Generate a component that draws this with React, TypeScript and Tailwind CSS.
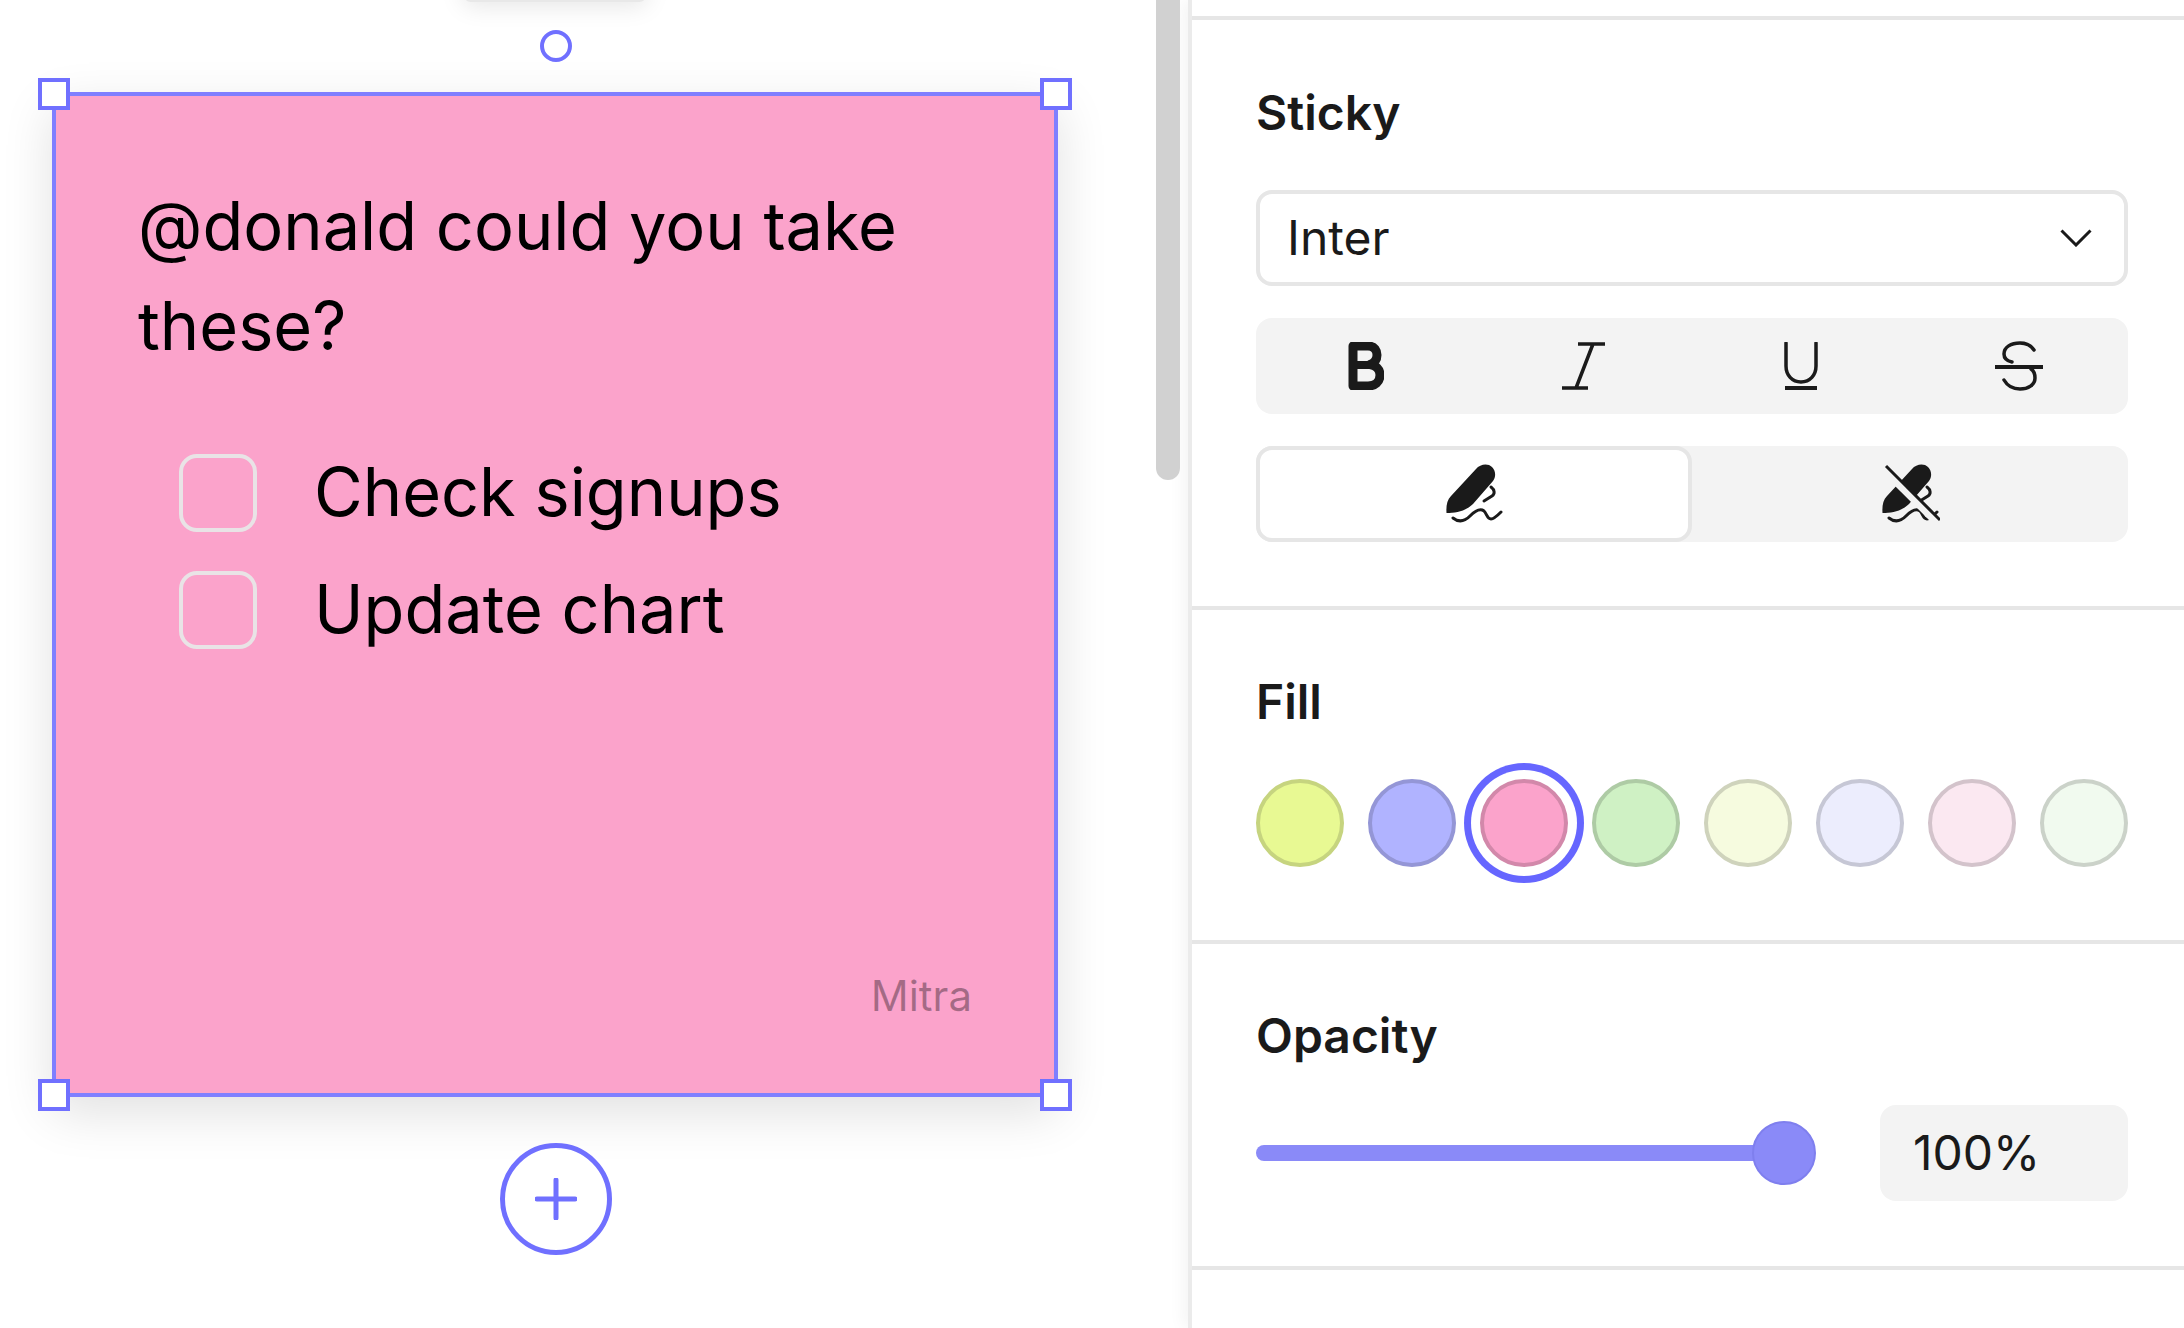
const font = { fontFamily: "Inter, sans-serif" };

const swatches = [
  { color: "bg-[#e8f993]", border: "border-[#c6d47f]", selected: false },
  { color: "bg-[#b0b3ff]", border: "border-[#9496d6]", selected: false },
  { color: "bg-[#fba3cb]", border: "border-[#d288aa]", selected: true },
  { color: "bg-[#cff1c4]", border: "border-[#aecba5]", selected: false },
  { color: "bg-[#f6fbdf]", border: "border-[#cfd3bc]", selected: false },
  { color: "bg-[#ecedfd]", border: "border-[#c6c7d5]", selected: false },
  { color: "bg-[#fbe8f1]", border: "border-[#d3c3cb]", selected: false },
  { color: "bg-[#f1faef]", border: "border-[#cbd2c9]", selected: false },
];

// Corner handle of the selection box
function Handle({ className }: { className: string }) {
  return <div className={`absolute h-8 w-8 border-4 border-[#7070ff] bg-white ${className}`} />;
}

function PenIcon({ off }: { off?: boolean }) {
  return (
    <svg width="60" height="62" viewBox="0 0 60 62" fill="none" className="text-[#1a1a1a]">
      <path
        d="M2.5 50 C2 43 3 37 7 33 L32 6 C36 1 44 0 48 4 C52 8 52 14 49 18 L29 41 C22 48 12 50 2.5 50 Z"
        fill="currentColor"
      />
      <path d="M47 24 C51 27 51 31 48 33 L40 38" stroke="currentColor" strokeWidth="3" strokeLinecap="round" />
      <path
        d="M9 55 C14 59 20 59 26 53 C30 49 36 45 40 48 C43 51 43 56 47 56 C50 56 54 52 57 49"
        stroke="currentColor"
        strokeWidth="3"
        strokeLinecap="round"
      />
      {off && (
        <>
          <path d="M3 6 L55 58" stroke="#f3f3f3" strokeWidth="7" />
          <path d="M6 3 L60 57" stroke="currentColor" strokeWidth="3" />
        </>
      )}
    </svg>
  );
}

export default function App() {
  return (
    <div className="flex h-screen w-full overflow-hidden bg-white text-[#1a1a1a]" style={font}>
      {/* Canvas */}
      <div className="relative w-[1188px] shrink-0 pl-[52px] pt-[92px]">
        <div className="absolute left-[463px] top-[-40px] h-[42px] w-[184px] rounded-lg bg-[#e8e8e8] shadow-[0_4px_24px_rgba(0,0,0,0.1)]" />

        <div className="relative h-[1005px] w-[1006px] border-4 border-[#7f7fff] bg-[#fba3cb] pl-[82px] pt-[80px] text-black shadow-[0_16px_48px_rgba(0,0,0,0.12)]">
          <p className="whitespace-nowrap text-[66.7px] leading-[100px]">
            @donald could you take
            <br />
            these?
          </p>
          <div className="mt-[58px] flex flex-col pl-[41px]">
            <div className="flex h-[117px] items-center gap-[57px]">
              <div className="h-[78px] w-[78px] rounded-[18px] border-4 border-[#e9e3e6]" />
              <span className="text-[66.7px]">Check signups</span>
            </div>
            <div className="flex h-[117px] items-center gap-[57px]">
              <div className="h-[78px] w-[78px] rounded-[18px] border-4 border-[#e9e3e6]" />
              <span className="text-[66.7px]">Update chart</span>
            </div>
          </div>
          <span className="absolute bottom-[66px] right-[82px] text-[42px] text-black/35">Mitra</span>

          <Handle className="left-[-18px] top-[-18px]" />
          <Handle className="right-[-18px] top-[-18px]" />
          <Handle className="bottom-[-18px] left-[-18px]" />
          <Handle className="bottom-[-18px] right-[-18px]" />
          <div className="absolute left-[484px] top-[-66px] h-8 w-8 rounded-full border-4 border-[#7070ff] bg-white" />
          <div className="absolute bottom-[-162px] left-[444px] flex h-[112px] w-[112px] items-center justify-center rounded-full border-[5px] border-[#7070ff] bg-white">
            <svg width="42" height="42" viewBox="0 0 42 42" fill="none">
              <path d="M21 2V40M2 21H40" stroke="#7070ff" strokeWidth="5" strokeLinecap="round" />
            </svg>
          </div>
        </div>

        <div className="absolute right-[8px] top-0 h-[480px] w-6 rounded-b-xl bg-[#d1d1d1]" />
      </div>

      {/* Properties panel */}
      <div className="flex min-w-0 flex-1 flex-col border-l-4 border-[#ebebeb] pt-4 shadow-[-4px_0_16px_rgba(0,0,0,0.05)]">
        <div className="h-[594px] border-y-4 border-[#e6e6e6] pl-[64px] pr-[56px] pt-[63px]">
          <h2 className="text-[48px] font-semibold leading-[60px]">Sticky</h2>

          <div className="mt-[47px] flex h-24 items-center justify-between rounded-2xl border-4 border-[#e6e6e6] pl-[27px] pr-[32px] text-[48px]">
            <span>Inter</span>
            <svg width="32" height="18" viewBox="0 0 32 18" fill="none">
              <path d="M1.5 1.5L16 16L30.5 1.5" stroke="#1a1a1a" strokeWidth="3" />
            </svg>
          </div>

          <div className="mt-8 grid h-24 grid-cols-4 rounded-2xl bg-[#f3f3f3]">
            <div className="flex items-center justify-center">
              <svg width="36" height="48" viewBox="0 0 36 48" fill="none" className="ml-[2px]">
                <path
                  d="M5 4H20C27 4 29 9 29 13C29 18 26 21 22 22.5C28 23.5 32 27 32 33C32 40 27 44 20 44H5Z"
                  stroke="#1a1a1a"
                  strokeWidth="9"
                  strokeLinejoin="round"
                />
                <path d="M5 23H21" stroke="#1a1a1a" strokeWidth="8" />
              </svg>
            </div>
            <div className="flex items-center justify-center">
              <svg width="44" height="48" viewBox="0 0 44 48" fill="none">
                <path d="M17 2H44M1 46H27M32 2L15 46" stroke="#1a1a1a" strokeWidth="3.5" />
              </svg>
            </div>
            <div className="flex items-center justify-center">
              <svg width="34" height="48" viewBox="0 0 34 48" fill="none">
                <path
                  d="M2 1V24C2 33 8 40 17 40C26 40 32 33 32 24V1"
                  stroke="#1a1a1a"
                  strokeWidth="3.5"
                  strokeLinecap="round"
                />
                <path d="M1 46H33" stroke="#1a1a1a" strokeWidth="4" />
              </svg>
            </div>
            <div className="flex items-center justify-center">
              <svg width="48" height="50" viewBox="0 0 48 50" fill="none">
                <path d="M0 26H48" stroke="#1a1a1a" strokeWidth="4" />
                <path
                  d="M39 9C35 3 30 2 25 2C16 2 9 6 9 13C9 18 12 20 17 21M9 39C13 46 19 48 25 48C33 48 40 44 40 37C40 33 39 30 36 28"
                  stroke="#1a1a1a"
                  strokeWidth="3.5"
                  strokeLinecap="round"
                />
              </svg>
            </div>
          </div>

          <div className="mt-8 grid h-24 grid-cols-2 rounded-2xl bg-[#f3f3f3]">
            <div className="flex items-center justify-center rounded-2xl border-4 border-[#e6e6e6] bg-white">
              <PenIcon />
            </div>
            <div className="flex items-center justify-center">
              <PenIcon off />
            </div>
          </div>
        </div>

        <div className="h-[334px] border-b-4 border-[#e6e6e6] pl-[64px] pr-[56px] pt-[62px]">
          <h2 className="text-[48px] font-semibold leading-[60px]">Fill</h2>
          <div className="mt-[47px] flex justify-between">
            {swatches.map((s, i) => (
              <div
                key={i}
                className={`h-[88px] w-[88px] rounded-full border-4 ${s.color} ${s.border} ${
                  s.selected ? "shadow-[0_0_0_9px_#ffffff,0_0_0_16px_#6666ff]" : ""
                }`}
              />
            ))}
          </div>
        </div>

        <div className="h-[326px] border-b-4 border-[#e6e6e6] pl-[64px] pr-[56px] pt-[62px]">
          <h2 className="text-[48px] font-semibold leading-[60px]">Opacity</h2>
          <div className="mt-[39px] flex items-center justify-between">
            <div className="relative h-4 w-[560px]">
              <div className="h-4 w-[530px] rounded-l-full bg-[#8a8af8]" />
              <div className="absolute right-0 top-[-24px] h-16 w-16 rounded-full border-2 border-[#7f7fee] bg-[#8a8af8]" />
            </div>
            <div className="flex h-24 w-[248px] items-center rounded-2xl bg-[#f3f3f3] pl-[33px] text-[48px]">100%</div>
          </div>
        </div>
      </div>
    </div>
  );
}
